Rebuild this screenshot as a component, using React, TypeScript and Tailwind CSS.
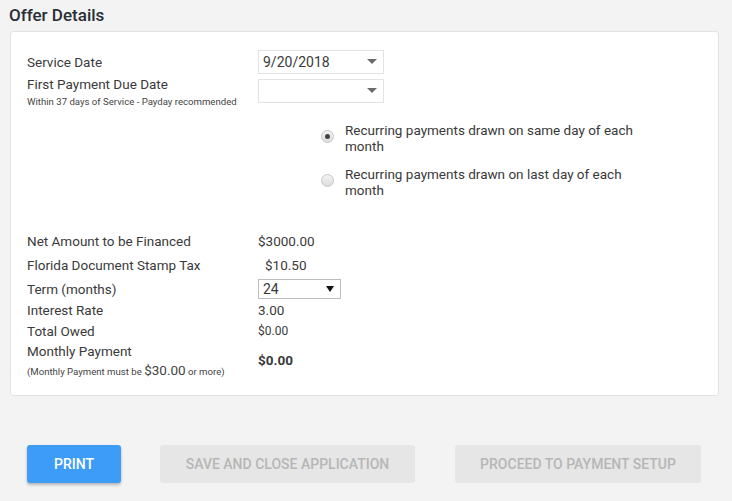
import React from "react";

function Caret({ className = "" }: { className?: string }) {
  return (
    <svg width="10" height="6" viewBox="0 0 10 6" className={className}>
      <path d="M0 0 L10 0 L5 5 Z" fill="currentColor" />
    </svg>
  );
}

function Radio({ checked }: { checked?: boolean }) {
  return (
    <div className="w-[13px] h-[13px] rounded-full border border-[#c8c8c8] bg-gradient-to-b from-[#f4f4f4] to-[#dcdcdc] flex items-center justify-center shrink-0">
      {checked && <div className="w-[5px] h-[5px] rounded-full bg-[#444]" />}
    </div>
  );
}

export default function App() {
  return (
    <div
      className="w-[732px] h-[501px] bg-[#f3f3f3] overflow-hidden text-[#3a3a3a]"
      style={{ fontFamily: "Roboto, 'Liberation Sans', sans-serif" }}
    >
      <div className="pl-[9px] pt-[4px] h-[31px] text-[17px] leading-[22px] font-medium text-[#2a2e36]">
        Offer Details
      </div>
      <div className="ml-[10px] w-[709px] bg-white border border-[#e2e2e2] rounded-[3px] pt-[18px] pb-[14px] pl-[16px] text-[13.5px]">
        <div className="flex h-[24px] items-center">
          <div className="w-[231px]">Service Date</div>
          <div className="w-[126px] h-[24px] border border-[#e3e3e3] flex items-center justify-between pl-[4px] pr-[6px] text-[14px]">
            <span>9/20/2018</span>
            <Caret className="text-[#6b6b6b]" />
          </div>
        </div>
        <div className="flex mt-[5px] h-[24px]">
          <div className="w-[231px]">
            <div className="leading-[12px] mt-[-1px]">First Payment Due Date</div>
            <div className="text-[9.6px] leading-[16px] mt-[4px] text-[#444]">
              Within 37 days of Service - Payday recommended
            </div>
          </div>
          <div className="w-[126px] h-[24px] border border-[#e3e3e3] flex items-center justify-end pr-[6px]">
            <Caret className="text-[#6b6b6b]" />
          </div>
        </div>
        <div className="ml-[294px] mt-[19px] flex flex-col gap-[12px]">
          <div className="flex items-center gap-[11px]">
            <div className="mt-[-3px]"><Radio checked /></div>
            <div className="w-[295px] leading-[16px]">
              Recurring payments drawn on same day of each month
            </div>
          </div>
          <div className="flex items-center gap-[11px]">
            <div className="mt-[-3px]"><Radio /></div>
            <div className="w-[295px] leading-[16px]">
              Recurring payments drawn on last day of each month
            </div>
          </div>
        </div>
        <div className="mt-[31px] flex h-[24px] items-center">
          <div className="w-[231px]">Net Amount to be Financed</div>
          <div>$3000.00</div>
        </div>
        <div className="flex h-[24px] items-center">
          <div className="w-[231px]">Florida Document Stamp Tax</div>
          <div className="pl-[7px]">$10.50</div>
        </div>
        <div className="flex h-[24px] items-center">
          <div className="w-[231px]">Term (months)</div>
          <div className="w-[83px] h-[20px] border border-[#bdbdbd] flex items-center justify-between pl-[4px] pr-[6px] text-[14px]">
            <span>24</span>
            <svg width="8" height="6" viewBox="0 0 8 6">
              <path d="M0 0 L8 0 L4 6 Z" fill="#111" />
            </svg>
          </div>
        </div>
        <div className="flex h-[19px] items-center">
          <div className="w-[231px]">Interest Rate</div>
          <div>3.00</div>
        </div>
        <div className="flex h-[22px] items-center">
          <div className="w-[231px]">Total Owed</div>
          <div className="text-[12px]">$0.00</div>
        </div>
        <div className="flex items-center">
          <div className="w-[231px]">
            <div className="leading-[19px]">Monthly Payment</div>
            <div className="text-[9.6px] leading-[18px] text-[#444]">
              (Monthly Payment must be <span className="text-[13.5px]">$30.00</span> or more)
            </div>
          </div>
          <div className="font-bold mb-[3px]">$0.00</div>
        </div>
      </div>
      <div className="flex mt-[49px] pl-[27px]">
        <button className="w-[94px] h-[38px] rounded-[3px] bg-[#3d9cf7] text-white text-[14px] font-medium shadow-[0_2px_3px_rgba(0,0,0,0.25)]">
          PRINT
        </button>
        <button className="ml-[39px] w-[255px] h-[38px] rounded-[3px] bg-[#e6e6e6] text-[#b6b6b6] text-[14px] font-medium">
          SAVE AND CLOSE APPLICATION
        </button>
        <button className="ml-[40px] w-[246px] h-[38px] rounded-[3px] bg-[#e6e6e6] text-[#b6b6b6] text-[14px] font-medium">
          PROCEED TO PAYMENT SETUP
        </button>
      </div>
    </div>
  );
}
